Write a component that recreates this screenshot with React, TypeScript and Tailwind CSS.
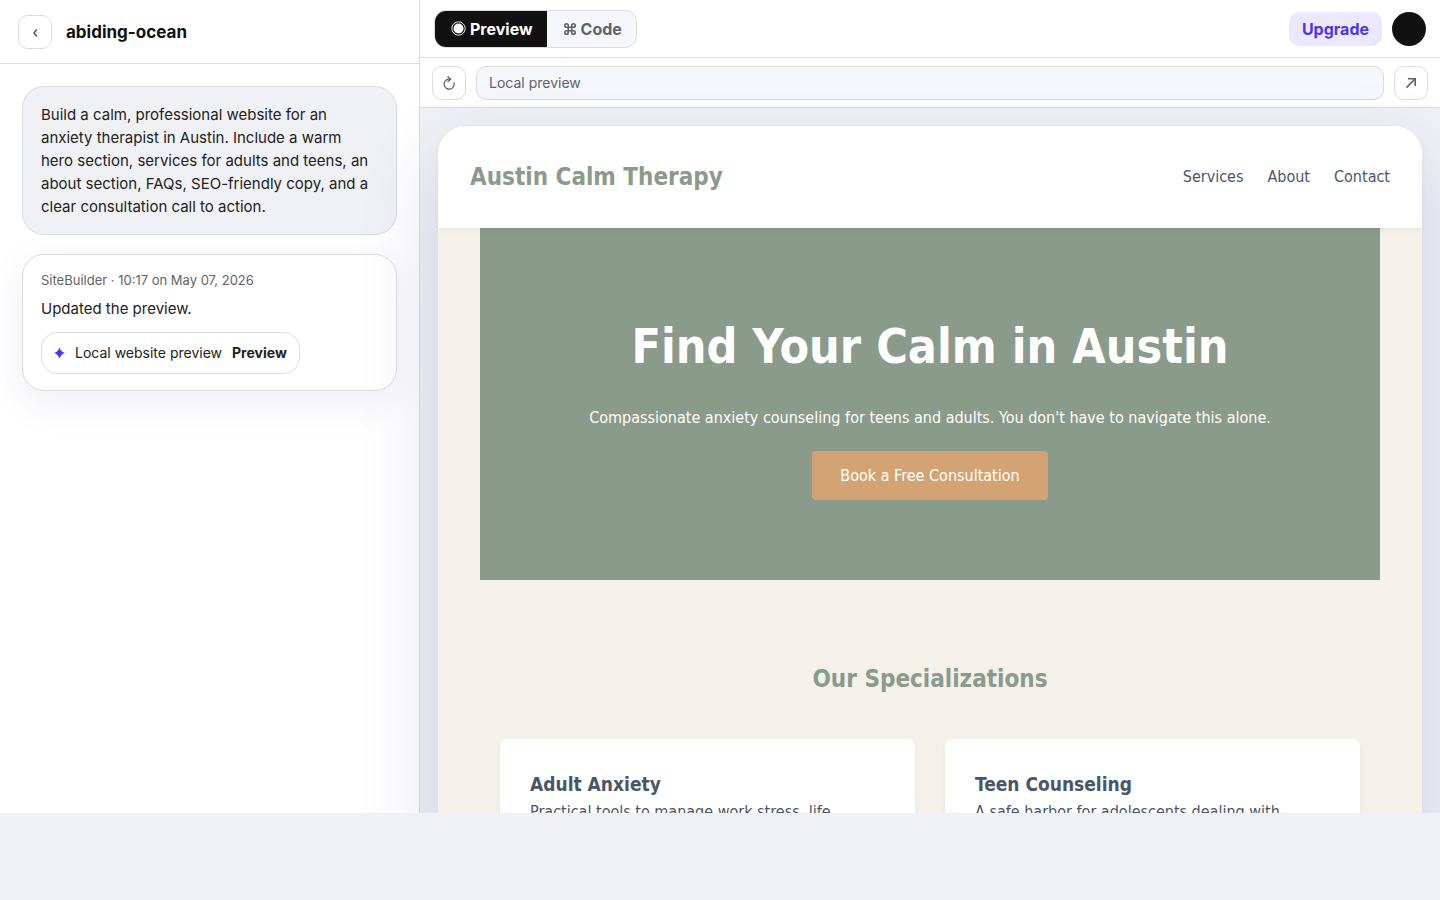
import React from 'react'

const services = [
  {
    title: 'Adult Anxiety',
    text: 'Practical tools to manage work stress, life transitions, and constant worry.',
  },
  {
    title: 'Teen Counseling',
    text: 'A safe harbor for adolescents dealing with school pressure and social anxiety.',
  },
]

const navLinks = ['Services', 'About', 'Contact']

function Sidebar() {
  return (
    <aside className="flex w-[420px] shrink-0 flex-col border-r border-[#dadce0] bg-white">
      <header className="flex h-16 shrink-0 items-center gap-3.5 border-b border-[#dadce0] px-[18px]">
        <button
          aria-label="Back"
          className="flex size-[34px] items-center justify-center rounded-[10px] border border-[#dadce0] bg-white pt-0.5 text-[#5f6368]"
        >
          <svg width="6" height="8" viewBox="0 0 6 8" fill="none" stroke="currentColor" strokeWidth="1.6">
            <path d="M4.8 0.4 2 4l2.8 3.6" />
          </svg>
        </button>
        <h1 className="text-[17px] leading-6 font-bold text-[#111]">abiding-ocean</h1>
      </header>

      <div className="flex flex-col gap-[19px] p-[22px]">
        <div className="rounded-[22px] border border-[#dadce0] bg-[#f0f1f5] py-4 pr-[22px] pl-[18px] text-[15px] leading-[23px]">
          Build a calm, professional website for an anxiety therapist in Austin. Include a warm hero section,
          services for adults and teens, an about section, FAQs, SEO-friendly copy, and a clear consultation call
          to action.
        </div>

        <div className="rounded-[22px] border border-[#dadce0] bg-white px-[18px] py-4 shadow-[0_12px_40px_rgba(48,38,132,0.08)]">
          <div className="text-[13px] leading-[18px] text-[#5f6368]">SiteBuilder · 10:17 on May 07, 2026</div>
          <p className="mt-2 text-[15px] leading-[23px]">Updated the preview.</p>
          <button className="mt-3 flex h-[42px] items-center gap-2.5 rounded-2xl border border-[#dadce0] bg-white px-3 text-sm">
            <svg width="11" height="12" viewBox="0 0 11 12" className="fill-[#4f35e8]">
              <path d="M5.5 0.4Q6.8 4.7 11 6 6.8 7.3 5.5 11.6 4.2 7.3 0 6 4.2 4.7 5.5 0.4z" />
            </svg>
            <span>Local website preview</span>
            <strong className="font-bold">Preview</strong>
          </button>
        </div>
      </div>
    </aside>
  )
}

function Toolbar() {
  return (
    <>
      <div className="flex h-[58px] shrink-0 items-center justify-between border-b border-[#dadce0] bg-white px-3.5">
        <div className="flex h-[38px] overflow-hidden rounded-xl border border-[#dadce0] bg-[#f6f7fc] text-base font-bold">
          <button className="flex items-center gap-1 bg-[#111] pr-3.5 pl-4 text-white">
            <svg width="15" height="15" viewBox="0 0 15 15" fill="none">
              <circle cx="7.5" cy="7.5" r="6.7" stroke="currentColor" strokeWidth="0.9" />
              <circle cx="7.5" cy="7.5" r="5" fill="currentColor" />
            </svg>
            Preview
          </button>
          <button className="flex items-center gap-1 pr-3.5 pl-4 text-[#5f6368]">
            <svg width="14" height="14" viewBox="0 0 24 24" fill="none" stroke="currentColor" strokeWidth="2.8">
              <path d="M15 6v12a3 3 0 1 0 3-3H6a3 3 0 1 0 3 3V6a3 3 0 1 0-3 3h12a3 3 0 1 0-3-3" />
            </svg>
            Code
          </button>
        </div>
        <div className="flex items-center gap-2.5">
          <button className="h-[34px] rounded-[10px] bg-[#ece8ff] px-[13px] text-base font-bold text-[#4f35e8]">
            Upgrade
          </button>
          <button aria-label="Account" className="size-[34px] rounded-full bg-[#111]" />
        </div>
      </div>

      <div className="flex h-[50px] shrink-0 items-center gap-2.5 border-b border-[#dadce0] bg-white px-3">
        <button
          aria-label="Reload"
          className="flex size-[34px] shrink-0 items-center justify-center rounded-[10px] border border-[#dadce0] text-[#5f6368]"
        >
          <svg width="14" height="14" viewBox="0 0 14 14" fill="none" stroke="currentColor" strokeWidth="1.3">
            <path d="M11.8 6.4A5 5 0 1 1 6.8 3.2h1.6" />
            <path d="M5.6 0.4 8.6 3.2 5.6 6" />
          </svg>
        </button>
        <input
          aria-label="Preview address"
          readOnly
          value="Local preview"
          className="h-[34px] min-w-0 flex-1 rounded-[10px] border border-[#dadce0] bg-[#f6f7fc] px-3 text-sm text-[#5f6368]"
        />
        <button
          aria-label="Open in new tab"
          className="flex size-[34px] shrink-0 items-center justify-center rounded-[10px] border border-[#dadce0] text-[#5f6368]"
        >
          <svg width="12" height="12" viewBox="0 0 12 12" fill="none" stroke="currentColor" strokeWidth="1.6">
            <path d="M1.4 10.6 10 2" />
            <path d="M3 1.8h7.2V9" />
          </svg>
        </button>
      </div>
    </>
  )
}

function SitePreview() {
  return (
    <div className="flex-1 rounded-t-[28px] bg-[#f4f1ea] font-['DejaVu_Sans_Condensed','DejaVu_Sans',sans-serif] text-base leading-[26px] text-[#4a5568] shadow-[0_30px_80px_rgba(48,38,132,0.16)]">
      <header className="relative flex items-center justify-between rounded-t-[28px] bg-white p-8 shadow-[0_2px_5px_rgba(0,0,0,0.05)]">
        <div className="text-2xl leading-[38px] font-bold text-[#8a9a8b]">Austin Calm Therapy</div>
        <nav className="flex gap-6">
          {navLinks.map((link) => (
            <a key={link} href="#">
              {link}
            </a>
          ))}
        </nav>
      </header>

      <section className="mx-auto flex max-w-[900px] flex-col items-center gap-5 bg-[#8a9a8b] py-20 text-center text-white">
        <h1 className="text-5xl leading-[77px] font-bold">Find Your Calm in Austin</h1>
        <p>Compassionate anxiety counseling for teens and adults. You don't have to navigate this alone.</p>
        <a href="#" className="flex h-[49px] items-center rounded bg-[#d4a373] px-7">
          Book a Free Consultation
        </a>
      </section>

      <section className="mx-auto max-w-[900px] px-5 py-20">
        <h2 className="text-center text-2xl leading-[39px] font-bold text-[#8a9a8b]">Our Specializations</h2>
        <div className="mt-10 grid grid-cols-2 gap-[30px]">
          {services.map((s) => (
            <div key={s.title} className="rounded-lg bg-white p-[30px] shadow-[0_4px_6px_rgba(0,0,0,0.05)]">
              <h3 className="text-[19px] leading-[30px] font-bold">{s.title}</h3>
              <p>{s.text}</p>
            </div>
          ))}
        </div>
      </section>
    </div>
  )
}

export default function App() {
  return (
    <div className="min-h-screen bg-[#f0f1f5] font-['Inter',sans-serif] text-[#222]">
      <div className="flex h-[calc(100vh-87px)] overflow-hidden">
        <Sidebar />
        <main className="flex min-w-0 flex-1 flex-col">
          <Toolbar />
          <div className="flex min-h-0 flex-1 flex-col px-[18px] pt-[18px]">
            <SitePreview />
          </div>
        </main>
      </div>
    </div>
  )
}
